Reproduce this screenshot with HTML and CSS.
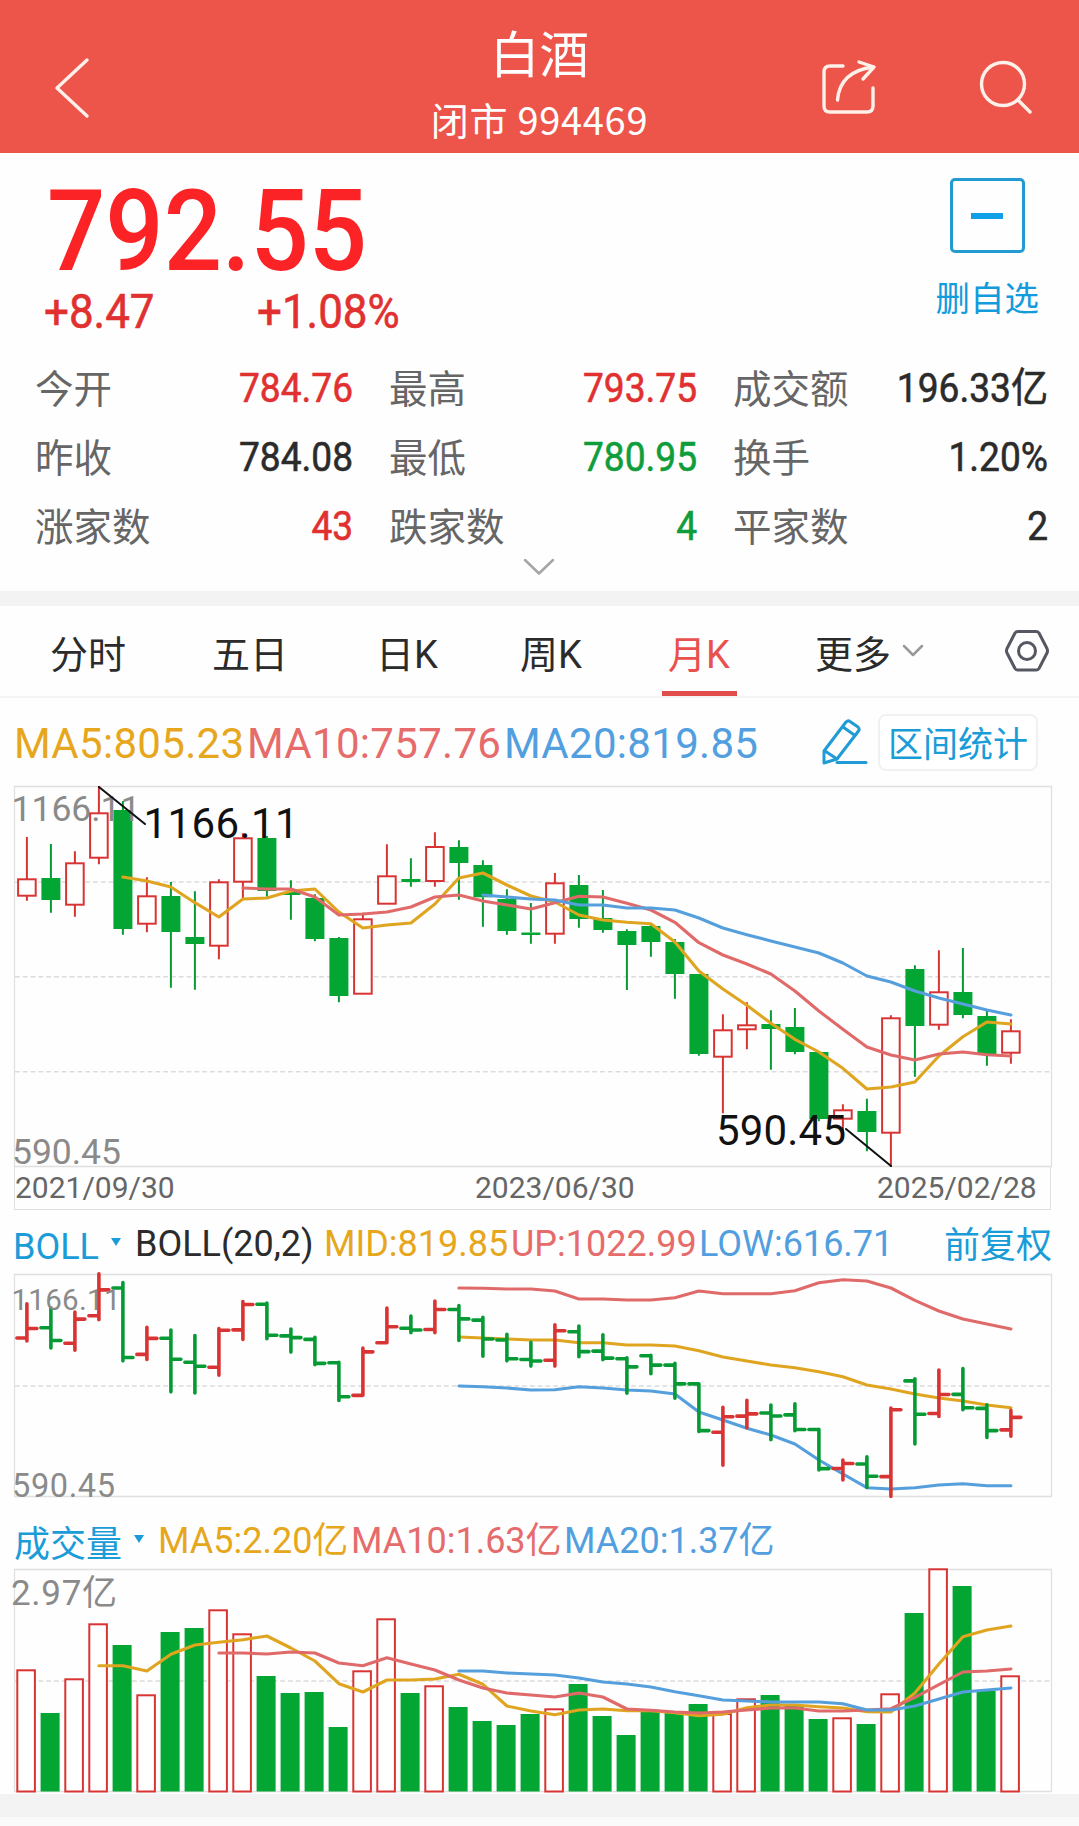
FILE: index.html
```html
<!DOCTYPE html>
<html lang="zh-CN">
<head>
  <meta charset="UTF-8">
  <title>白酒 994469</title>
  <link rel="stylesheet" href="styles.css">
</head>
<body>
  <header class="topbar">
    <svg class="back" width="40" height="66" viewBox="0 0 40 66">
      <path d="M36 5 L6 33 L36 61"/>
    </svg>
    <div class="title">
      <h1>白酒</h1>
      <p>闭市 994469</p>
    </div>
    <div class="actions">
      <svg width="60" height="60" viewBox="0 0 60 60">
        <path d="M24 8 H11 Q5 8 5 14 V48 Q5 54 11 54 H48 Q54 54 54 48 V30"/>
        <path d="M18.500 42 C20 24 31 12 54 9"/>
        <path d="M40 4 L55 9 L44 21"/>
      </svg>
      <svg width="60" height="60" viewBox="0 0 60 60">
        <circle cx="27" cy="26" r="21.500"/>
        <path d="M42 42 L54 54"/>
      </svg>
    </div>
  </header>

  <section class="quote">
    <div class="summary">
      <div class="price">
        <div class="last"><span>792.55</span></div>
        <div class="change"><span>+8.47</span><span>+1.08%</span></div>
      </div>
      <div class="remove">
        <div class="remove-box"><i></i></div>
        <span>删自选</span>
      </div>
    </div>
    <div class="stats">
      <div><label>今开</label><b class="up">784.76</b></div>
      <div><label>最高</label><b class="up">793.75</b></div>
      <div><label>成交额</label><b>196.33亿</b></div>
      <div><label>昨收</label><b>784.08</b></div>
      <div><label>最低</label><b class="down">780.95</b></div>
      <div><label>换手</label><b>1.20%</b></div>
      <div><label>涨家数</label><b class="up">43</b></div>
      <div><label>跌家数</label><b class="down">4</b></div>
      <div><label>平家数</label><b>2</b></div>
    </div>
    <svg class="expand" width="34" height="20" viewBox="0 0 34 20">
      <path d="M3 3 L17 16.500 L31 3"/>
    </svg>
  </section>

  <nav class="tabs">
    <a>分时</a>
    <a>五日</a>
    <a>日K</a>
    <a>周K</a>
    <a class="active">月K</a>
    <a>更多<svg width="22" height="16" viewBox="0 0 22 16"><path d="M2 3 L11 12 L20 3"/></svg></a>
    <svg class="setting" width="46" height="46" viewBox="0 0 46 46">
      <path d="M14 3.500 H32 Q34 3.500 35 5 L43 20.500 Q44 23 43 25 L35 40.500 Q34 42 32 42 H14 Q12 42 11 40.500 L3 25 Q2 23 3 20.500 L11 5 Q12 3.500 14 3.500 Z"/>
      <circle cx="23" cy="23" r="8.500"/>
    </svg>
  </nav>

  <div class="legend legend-main">
    <span class="ma5">MA5:805.23</span>
    <span class="ma10">MA10:757.76</span>
    <span class="ma20">MA20:819.85</span>
    <svg width="48" height="48" viewBox="0 0 48 48">
      <path d="M4 33 L26 4 Q28 2 30 3.500 L38 9 Q40 11 38.500 13 L17 41 L4 45 Z"/>
      <path d="M23 9 L35 17.500 M5 33 L17 41"/>
      <path d="M17 44.500 H46"/>
    </svg>
    <button>区间统计</button>
  </div>

  <svg class="chart" id="kline" width="1079" height="381" viewBox="0 786 1079 381"></svg>
  <div class="dates">
    <span>2021/09/30</span>
    <span>2023/06/30</span>
    <span>2025/02/28</span>
  </div>

  <div class="legend legend-boll">
    <span class="pick">BOLL</span>
    <i class="caret"></i>
    <span>BOLL(20,2)</span>
    <span class="ma5">MID:819.85</span>
    <span class="ma10">UP:1022.99</span>
    <span class="ma20">LOW:616.71</span>
    <span class="adjust">前复权</span>
  </div>
  <svg class="chart" id="boll" width="1079" height="223" viewBox="0 1274 1079 223"></svg>

  <div class="legend legend-vol">
    <span class="pick">成交量</span>
    <i class="caret"></i>
    <span class="ma5">MA5:2.20亿</span>
    <span class="ma10">MA10:1.63亿</span>
    <span class="ma20">MA20:1.37亿</span>
  </div>
  <svg class="chart" id="volume" width="1079" height="225" viewBox="0 1569 1079 225"></svg>

  <footer></footer>
  <script src="chart.js"></script>
</body>
</html>
```
FILE: styles.css
```css
* {
  box-sizing: border-box;
}
body {
  margin: 0;
  width: 1079px;
  height: 1826px;
  overflow: hidden;
  background-color: #fefefe;
  color: #2b2b2b;
  font-family: Roboto, "Noto Sans CJK SC", sans-serif;
}
svg {
  fill: none;
  stroke-linecap: round;
  stroke-linejoin: round;
}

/* header */
.topbar {
  display: grid;
  grid-template-columns: 1fr 280px 1fr;
  height: 153px;
  background-color: #ed544a;
  color: #fff;
}
.topbar svg {
  stroke: #fff0ea;
  stroke-width: 3.4;
}
.back {
  margin: 55px 0 0 51px;
}
.title {
  text-align: center;
  font-family: "Noto Sans CJK SC", sans-serif;
}
.title h1 {
  margin: 19px 0 0;
  font-size: 49.5px;
  font-weight: 400;
  line-height: 66px;
}
.title p {
  margin: 9px 0 0;
  font-size: 38px;
  line-height: 50px;
  letter-spacing: 0.7px;
}
.actions {
  display: flex;
  gap: 97px;
  padding: 58px 0 0 139px;
}

/* price block */
.quote {
  height: 453px;
  border-bottom: 15px solid #f3f3f3;
}
.summary {
  display: flex;
  justify-content: space-between;
  height: 200px;
  padding: 25px 40px 0 44px;
}
.last {
  height: 104px;
  padding-left: 3px;
  color: #fb2325;
  font-size: 114px;
  font-weight: 500;
  line-height: 107px;
}
.last span, .change span, .stats b {
  display: inline-block;
  transform: scaleX(0.9);
  transform-origin: left;
}
.change {
  display: flex;
  color: #e13030;
  font-size: 48px;
  line-height: 59px;
  -webkit-text-stroke: 0.6px currentColor;
}
.change span {
  width: 213px;
  transform: scaleX(0.915);
}
.remove {
  display: flex;
  flex-direction: column;
  align-items: center;
  color: #149bdc;
  font-size: 34.5px;
}
.remove-box {
  display: flex;
  align-items: center;
  justify-content: center;
  width: 75px;
  height: 75px;
  border: 3px solid #229bd2;
  border-radius: 5px;
}
.remove-box i {
  width: 32px;
  height: 6px;
  background-color: #10a0e8;
}
.remove span {
  margin-top: 21px;
  line-height: 50px;
}
.stats {
  display: grid;
  grid-template-columns: 317px 307px 314px;
  grid-auto-rows: 69px;
  column-gap: 37px;
  padding-left: 35px;
}
.stats div {
  display: flex;
  align-items: center;
  justify-content: space-between;
}
.stats label {
  padding-bottom: 4px;
  color: #666;
  font-size: 38.5px;
}
.stats b {
  font-size: 41px;
  font-weight: 400;
  line-height: 60px;
  transform: translateX(1px) scaleX(0.905);
  transform-origin: right;
  -webkit-text-stroke: 0.6px currentColor;
}
.stats .up {
  color: #e13030;
}
.stats .down {
  color: #0f9d3c;
}
.expand {
  display: block;
  margin: -3px auto 0 522px;
  stroke: #a5a5a5;
  stroke-width: 2.5;
}

/* period tabs */
.tabs {
  display: grid;
  grid-template-columns: 162px 164px 144px 148px 147px 243px 46px;
  align-items: center;
  height: 92px;
  padding-left: 50px;
  border-bottom: 2px solid #f3f4f5;
  font-size: 38px;
}
.tabs a {
  display: flex;
  align-items: center;
  height: 90px;
}
.tabs .active {
  width: 75px;
  margin-left: -6px;
  padding-left: 6px;
  border-bottom: 5px solid #e14f4d;
  border-top: 5px solid transparent;
  color: #e8524e;
}
.tabs a svg {
  margin: 0 0 0 11px;
  stroke: #999;
  stroke-width: 2.5;
}
.tabs .setting {
  margin-left: -54px;
  stroke: #555861;
  stroke-width: 3;
}

/* legends over each chart */
.legend {
  display: grid;
  align-items: center;
  font-size: 36px;
  white-space: nowrap;
}
.ma5 {
  color: #e6a71d;
}
.ma10 {
  color: #e66b6b;
}
.ma20 {
  color: #529fe0;
}
.pick, .adjust {
  color: #1a9cd8;
}
.caret {
  border: 5px solid transparent;
  border-top: 8px solid #1a9cd8;
  border-bottom: 0;
  width: 0;
}
.legend-main {
  grid-template-columns: 233px 257px 316px 58px 160px;
  height: 88px;
  padding-left: 14px;
  font-size: 42px;
  letter-spacing: 0.3px;
}
.legend-main span {
  padding-top: 2px;
}
.legend-main svg {
  stroke: #209bd6;
  stroke-width: 3;
}
.legend-main button {
  width: 160px;
  height: 57px;
  padding: 0 0 3px;
  border: 2px solid #f0f1f2;
  border-radius: 8px;
  background-color: #fff;
  color: #1a9cd8;
  font-family: "Noto Sans CJK SC", sans-serif;
  font-size: 35px;
}
.legend-boll {
  grid-template-columns: 98px 24px 189px 187px 188px 245px 110px;
  height: 64px;
  padding-left: 13px;
}
.legend-boll span {
  padding-top: 4px;
}
.legend-boll .pick {
  padding-top: 9px;
}
.legend-boll .adjust {
  padding-top: 0;
}
.legend-vol {
  grid-template-columns: 120px 24px 193px 213px 300px;
  height: 72px;
  padding: 7px 0 0 14px;
}
.legend-vol .pick {
  padding-top: 8px;
}
.legend-vol .caret {
  margin-top: 4px;
}

/* charts */
.chart {
  display: block;
  overflow: visible;
}
.chart text {
  stroke: none;
}
.frame {
  stroke: #e0e0e0;
  stroke-width: 1.3;
}
.grid {
  stroke: #dcdcdc;
  stroke-width: 1.5;
  stroke-dasharray: 4.8 3;
  stroke-linecap: butt;
}
.rise {
  stroke: #d93434;
  stroke-width: 2;
  stroke-linecap: butt;
  stroke-linejoin: miter;
}
.fall {
  stroke: #069a35;
  stroke-width: 2;
  stroke-linecap: butt;
}
rect.rise {
  fill: #fff;
}
rect.fall {
  fill: #03a632;
  stroke: none;
}
.ohlc {
  stroke-width: 3.6;
  stroke-linecap: round;
}
.line {
  stroke-width: 3.1;
}
.line-ma5 {
  stroke: #e0a520;
}
.line-ma10 {
  stroke: #e06a6a;
}
.line-ma20 {
  stroke: #559fdc;
}
.axis {
  fill: #8a8a8a;
}
.mark {
  fill: #111;
  font-size: 42px;
}
.pointer {
  stroke: #111;
  stroke-width: 2;
}
.dates {
  display: grid;
  grid-template-columns: 460px 402px 1fr;
  align-items: center;
  width: 1037px;
  height: 43px;
  padding-bottom: 2px;
  margin-left: 14px;
  border: 1px solid #e0e0e0;
  border-top: none;
  color: #666;
  font-size: 30px;
}
footer {
  height: 32px;
  background-color: #f3f3f3;
  border-bottom: 9px solid #fafafa;
}
```
FILE: chart.js
```js
const NS = 'http://www.w3.org/2000/svg';
const FIRST_X = 26.9;
const STEP = 24;

// [rise, high, body top, body bottom, low]
const candles = [
  [1, 837, 879.3, 895.7, 900.7], [0, 844, 878, 900, 912.7], [1, 851.3, 863.3, 904.7, 916.7],
  [1, 786, 813.3, 857.7, 864.3], [0, 801, 810, 929, 934.7], [1, 877.3, 896.3, 923.7, 932.3],
  [0, 882, 896, 932, 987.7], [0, 891.3, 937, 944, 989.7], [1, 879.3, 882.3, 945.7, 959.3],
  [1, 833.3, 838.3, 881.7, 898.3], [0, 836, 838, 891, 896.7], [0, 880.3, 892, 895, 919.7],
  [0, 894.3, 898, 939, 941.3], [0, 937, 938, 996, 1002.3], [1, 912.7, 919.3, 993.7, 993.7],
  [1, 844.3, 876.3, 903.7, 903.7], [0, 858.3, 879, 882, 886.7], [1, 832.3, 847, 881, 886.7],
  [0, 840.3, 847, 863, 899.7], [0, 860.3, 865, 897.3, 926.7], [0, 889.3, 899, 931, 934.7],
  [0, 903, 932.5, 935, 943.7], [1, 873, 883.3, 933.7, 943.7], [0, 875, 885, 919, 927.7],
  [0, 890, 918, 930, 932.7], [0, 929.3, 931, 945, 990], [0, 925, 926, 942, 956.7],
  [0, 939, 942, 974, 998.7], [0, 974, 974, 1054, 1055.7], [1, 1014.3, 1030.3, 1056.7, 1113.3],
  [1, 1002.3, 1025.3, 1029.3, 1049.3], [0, 1010.3, 1024, 1029, 1069.7], [0, 1008, 1027, 1052, 1054.3],
  [0, 1051.7, 1052, 1119, 1121.3], [1, 1104.3, 1110.3, 1118.7, 1138.3], [0, 1098.7, 1111, 1132, 1151.3],
  [1, 1015.3, 1018.3, 1132.7, 1166.7], [0, 965.3, 969, 1026, 1076.7], [1, 950.3, 992.3, 1024.7, 1029.7],
  [0, 948, 992, 1015, 1018.3], [0, 1010, 1016, 1054, 1065.7], [1, 1019.3, 1031.3, 1052.7, 1063.7]
];

const ma5 = [877, 881, 887, 902.7, 917, 899, 898, 891, 889, 912, 928, 925, 923, 904, 878, 873, 885, 896, 902, 915,
  920, 922.3, 923.7, 942, 971, 989, 1005.3, 1023.3, 1039.3, 1052, 1068.3, 1089, 1087, 1082, 1056, 1036.7, 1022, 1024];
const ma10 = [888, 889, 889, 897, 915, 914, 912, 907, 897, 895, 901, 905, 909, 902.7, 896.3, 897, 903.3, 910, 922.3,
  942.7, 955, 964, 974, 991, 1011, 1029.3, 1047, 1055, 1060, 1054, 1052, 1054.7, 1056];
const ma20 = [895, 897, 899, 900, 905, 905, 908, 908, 910, 918, 928, 934.7, 941, 947, 953, 963, 976, 982, 991, 998,
  1004, 1010, 1015];

const up = [1288, 1288.3, 1289, 1289, 1291, 1299, 1299, 1300, 1300, 1297.7, 1291, 1293.7, 1293.7, 1293.7, 1290.7,
  1282.7, 1279.7, 1281, 1288, 1300.3, 1311, 1319, 1324, 1329];
const mid = [1337, 1338, 1339, 1340, 1340, 1342.7, 1342.7, 1345, 1345, 1346, 1350.7, 1357, 1361, 1365, 1367.7,
  1371.7, 1376.7, 1385, 1389, 1394, 1398, 1401, 1405, 1407.7];
const low = [1386, 1386.7, 1388, 1390, 1389.7, 1386.7, 1388, 1390, 1391, 1394, 1412, 1420, 1428.3, 1435, 1444,
  1460, 1474, 1487.7, 1489, 1487.7, 1485, 1483.7, 1485.7, 1485.7];

const volume = [1670.3, 1713, 1679.3, 1624.3, 1645, 1695.3, 1632, 1628, 1610.3, 1634.3, 1676, 1693, 1692, 1727,
  1671.3, 1619.3, 1693, 1686.3, 1707, 1721, 1725, 1714, 1709.3, 1684, 1716, 1735, 1712, 1711, 1704, 1714, 1699.3,
  1695, 1705, 1719, 1718.3, 1724, 1694.3, 1613, 1569.3, 1586, 1691, 1676.3];
const vol5 = [1665.7, 1665.7, 1671, 1654.3, 1645, 1642.3, 1639.7, 1636, 1648, 1661, 1683.7, 1692, 1680, 1680, 1679,
  1674.3, 1684.3, 1706, 1711, 1714.7, 1710, 1709, 1710.7, 1710.7, 1712.7, 1715.7, 1714.3, 1707.7, 1705, 1705,
  1706.7, 1708, 1711.7, 1712, 1693, 1664, 1636.7, 1630, 1626];
const vol10 = [1653, 1653, 1654, 1652, 1653, 1663, 1665.7, 1657.7, 1664, 1670, 1680, 1688, 1693, 1695, 1697, 1693,
  1697, 1709, 1710.3, 1712, 1713, 1712, 1710, 1708, 1708, 1711, 1711, 1710, 1708.7, 1697.3, 1684.7, 1672, 1671, 1669];
const vol20 = [1671, 1671, 1673, 1674, 1675, 1678, 1682, 1684, 1687, 1691.7, 1695.7, 1700, 1701, 1702, 1702, 1702,
  1703.7, 1710, 1710, 1706, 1699, 1692, 1690, 1688];

function add(svg, tag, attrs, text) {
  const el = document.createElementNS(NS, tag);
  for (const key in attrs) el.setAttribute(key, attrs[key]);
  if (text) el.textContent = text;
  svg.appendChild(el);
}

function frame(svg, top, bottom, rows) {
  add(svg, 'rect', { class: 'frame', x: 14.5, y: top, width: 1037, height: bottom - top });
  rows.forEach(y => add(svg, 'path', { class: 'grid', d: `M15 ${y} H1050` }));
}

// every average ends on the last candle
function line(svg, values, name) {
  const start = candles.length - values.length;
  const points = values.map((y, i) => `${FIRST_X + (start + i) * STEP},${y}`).join(' ');
  add(svg, 'polyline', { class: 'line line-' + name, points });
}

function label(svg, cls, x, y, size, width, text) {
  add(svg, 'text', { class: cls, x, y, 'font-size': size, textLength: width }, text);
}

function drawKline() {
  const svg = document.getElementById('kline');
  frame(svg, 786.5, 1166.5, [882, 976.7, 1071.7]);
  candles.forEach(([rise, high, top, bottom, lowest], i) => {
    const x = FIRST_X + i * STEP;
    const cls = rise ? 'rise' : 'fall';
    add(svg, 'path', { class: cls, d: `M${x} ${high} V${top} M${x} ${bottom} V${lowest}` });
    const half = rise ? 8.8 : 9.5;
    add(svg, 'rect', { class: cls, x: x - half, y: top, width: half * 2, height: bottom - top });
  });
  line(svg, ma5, 'ma5');
  line(svg, ma10, 'ma10');
  line(svg, ma20, 'ma20');
  label(svg, 'axis', 11.5, 821, 35.5, 129, '1166.11');
  label(svg, 'axis', 12, 1164, 35.5, 109, '590.45');
  add(svg, 'path', { class: 'pointer', d: 'M99 787 L145 824 M846 1129 L891 1166' });
  label(svg, 'mark', 143.5, 838, 42, 155, '1166.11');
  label(svg, 'mark', 716, 1145, 42, 130, '590.45');
}

function drawBoll() {
  const svg = document.getElementById('boll');
  const scale = y => 1274.3 + (y - 786.7) * 0.5848;
  frame(svg, 1274.5, 1496.5, [1386]);
  line(svg, up, 'ma10');
  line(svg, mid, 'ma5');
  line(svg, low, 'ma20');
  candles.forEach(([rise, high, top, bottom, lowest], i) => {
    const x = FIRST_X + i * STEP;
    const open = scale(rise ? bottom : top);
    const close = scale(rise ? top : bottom);
    add(svg, 'path', {
      class: 'ohlc ' + (rise ? 'rise' : 'fall'),
      d: `M${x} ${scale(high)} V${scale(lowest)} M${x - 10} ${open} H${x} M${x} ${close} H${x + 10}`
    });
  });
  label(svg, 'axis', 11.5, 1310, 29.5, 109, '1166.11');
  label(svg, 'axis', 12, 1497, 32.5, 103, '590.45');
}

function drawVolume() {
  const svg = document.getElementById('volume');
  frame(svg, 1569.5, 1791.5, [1681]);
  volume.forEach((top, i) => {
    const x = FIRST_X - 0.8 + i * STEP;
    const rise = candles[i][0];
    const half = rise ? 8.8 : 9.5;
    add(svg, 'rect', { class: rise ? 'rise' : 'fall', x: x - half, y: top, width: half * 2, height: 1791.5 - top });
  });
  line(svg, vol5, 'ma5');
  line(svg, vol10, 'ma10');
  line(svg, vol20, 'ma20');
  label(svg, 'axis', 11, 1605, 35, 106, '2.97亿');
}

drawKline();
drawBoll();
drawVolume();
```
